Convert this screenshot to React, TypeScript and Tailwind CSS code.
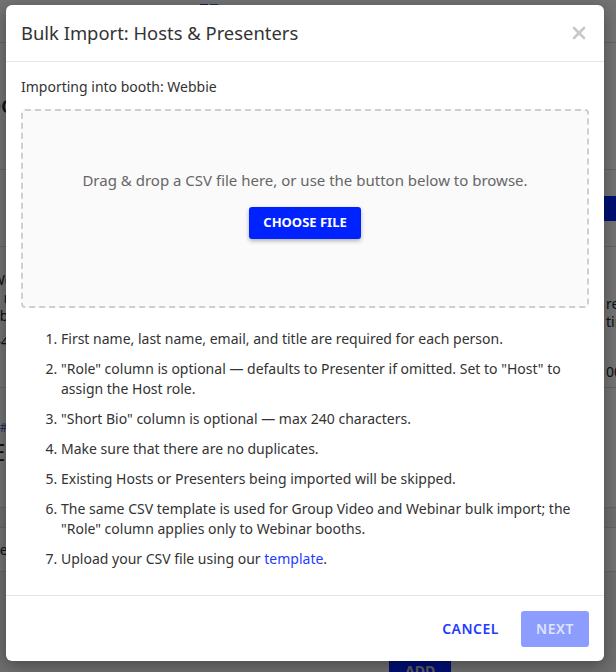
import { X } from 'lucide-react';

const steps: React.ReactNode[] = [
  'First name, last name, email, and title are required for each person.',
  '"Role" column is optional — defaults to Presenter if omitted. Set to "Host" to assign the Host role.',
  '"Short Bio" column is optional — max 240 characters.',
  'Make sure that there are no duplicates.',
  'Existing Hosts or Presenters being imported will be skipped.',
  'The same CSV template is used for Group Video and Webinar bulk import; the "Role" column applies only to Webinar booths.',
  <>
    Upload your CSV file using our{' '}
    <a href="#" className="text-[#1f3bff]">
      template
    </a>
    .
  </>,
];

// Page content sitting under the backdrop
function BoothPage() {
  return (
    <div className="min-h-[672px] bg-[#f4f4f4] text-[#222]">
      <div className="h-[43px] border-b border-[#ddd] bg-white">
        <div className="ml-[200px] flex gap-[2px] pt-1">
          <span className="h-4 w-2 bg-[#1f4fd0]" />
          <span className="h-4 w-2 bg-[#1a7fd8]" />
        </div>
      </div>
      <div className="flex h-[127px] items-center justify-between border-b border-[#ddd] bg-white pr-2 text-lg font-semibold">
        <span className="-ml-3">DO</span>
      </div>
      <div className="flex h-[77px] items-center justify-end border-b border-[#ddd] bg-white">
        <span className="h-[25px] w-[120px] bg-[#0022ff]" />
      </div>
      <div className="flex h-[141px] justify-between border-b border-[#ddd] bg-white pt-6 text-sm leading-[18px]">
        <div className="-ml-2">
          <div>Web</div>
          <div>5 m</div>
          <div>ab</div>
          <div className="mt-2">--4</div>
        </div>
        <div className="-mr-3 pt-6">
          <div>red</div>
          <div>tin</div>
          <div className="mt-8">00</div>
        </div>
      </div>
      <div className="h-[120px] border-b border-[#ddd] bg-white pt-8">
        <div className="-ml-2 text-xs text-[#4a5fd0]">##</div>
        <div className="-ml-2 text-2xl">EE</div>
      </div>
      <div className="h-[20px] border-b border-[#ddd]" />
      <div className="flex h-[44px] items-center border-b border-[#ddd] bg-white text-sm">
        <span className="-ml-2">Se</span>
      </div>
      <div className="flex justify-start pl-[389px] pt-[85px]">
        <span className="bg-[#0022ff] px-4 py-1 text-sm font-bold text-[#ccc]">ADD</span>
      </div>
    </div>
  );
}

export default function App() {
  return (
    <div className="relative h-[672px] w-[616px] overflow-hidden font-['Noto_Sans',sans-serif]">
      <BoothPage />
      <div className="absolute inset-0 bg-black/55" />
      <div className="absolute left-[6px] top-[5px] flex h-[656px] w-[598px] flex-col rounded-md bg-white shadow-[0_4px_16px_rgba(0,0,0,0.35)]">
        <div className="flex h-[57px] items-center justify-between border-b border-[#e5e5e5] pl-[15px] pr-[15px]">
          <h2 className="text-[18.4px] text-[#333]">Bulk Import: Hosts &amp; Presenters</h2>
          <X className="h-[20px] w-[20px] text-[#c8c8c8]" strokeWidth={3.2} />
        </div>

        <div className="flex-1 px-[15px] pt-[15px]">
          <p className="text-[14px] leading-5 text-[#333]">Importing into booth: Webbie</p>

          <div className="mt-[12px] flex h-[199px] flex-col items-center justify-center rounded-[4px] border-2 border-dashed border-[#cfcfcf] bg-[#fafafa]">
            <p className="mt-[-9px] text-[15px] text-[#666]">
              Drag &amp; drop a CSV file here, or use the button below to browse.
            </p>
            <button
              type="button"
              className="mt-[15px] h-8 rounded-[3px] bg-[#0022ff] px-[14px] text-[13px] font-bold text-white shadow-[0_2px_4px_rgba(0,0,0,0.3)]"
            >
              CHOOSE FILE
            </button>
          </div>

          <ol className="mt-[21px] list-decimal space-y-[10px] pl-[40px] pr-2 text-[14px] leading-[20px] text-[#333]">
            {steps.map((step, i) => (
              <li key={i}>{step}</li>
            ))}
          </ol>
        </div>

        <div className="flex h-[66px] items-center justify-end gap-[22px] border-t border-[#e5e5e5] px-[15px]">
          <button type="button" className="text-[14px] font-semibold tracking-[0.5px] text-[#1f3bff]">
            CANCEL
          </button>
          <button
            type="button"
            disabled
            className="h-[36px] w-[68px] rounded-[3px] bg-[#8c9dff] text-[14px] font-semibold tracking-[0.5px] text-[#dfe4ff]"
          >
            NEXT
          </button>
        </div>
      </div>
    </div>
  );
}
